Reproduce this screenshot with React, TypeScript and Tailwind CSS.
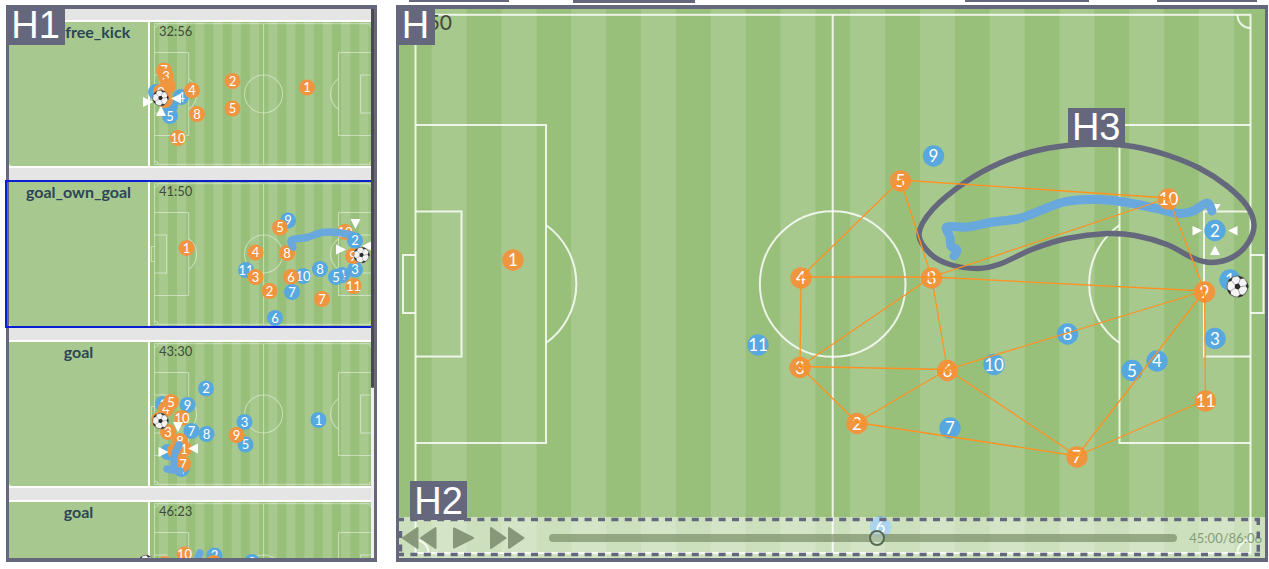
import { useState } from "react";

type Team = "home" | "away";
type Point = [number, number];
type Player = { team: Team; n: string; x: number; y: number };
type Arrow = { x: number; y: number; dir: "up" | "down" | "left" | "right" };
type MatchEvent = {
  name: string;
  time: string;
  players: Player[];
  over: Player[];
  ball: Point;
  trail: Point[];
  arrows: Arrow[];
};

const HOME = "#f0953f";
const AWAY = "#56a8de";

const h = (n: string, x: number, y: number): Player => ({ team: "home", n, x, y });
const a = (n: string, x: number, y: number): Player => ({ team: "away", n, x, y });

const squad: Player[] = [
  h("1", 513, 260), h("2", 857, 423.5), h("3", 800, 367.5), h("4", 801, 278),
  h("5", 900.5, 181), h("6", 947.5, 370.5), h("7", 1077, 457), h("8", 931.5, 278),
  h("9", 1204.5, 292), h("10", 1168.5, 199), h("11", 1205.5, 401),
  a("1", 1230, 280), a("2", 1215, 230.5), a("3", 1215, 338.5), a("4", 1157, 361),
  a("5", 1132, 370.5), a("6", 880.5, 527), a("7", 950, 428), a("8", 1067.5, 334),
  a("9", 933.5, 156), a("10", 994, 364.5), a("11", 758, 345),
];

const links: [string, string][] = [
  ["5", "10"], ["5", "4"], ["5", "8"], ["4", "8"], ["4", "3"], ["8", "3"], ["8", "6"],
  ["8", "10"], ["8", "9"], ["3", "6"], ["3", "2"], ["2", "6"], ["2", "7"], ["6", "7"],
  ["6", "9"], ["7", "9"], ["7", "11"], ["9", "11"], ["10", "9"],
];

const run: Point[] = [
  [954, 256], [957, 250], [951, 246], [950, 237], [947, 227], [967, 227], [993, 222],
  [1017, 219], [1033, 213.5], [1060, 203], [1077, 200], [1097, 199.5], [1117, 201],
  [1140, 205], [1167, 211], [1180, 213.5], [1193, 211], [1207, 203], [1212, 211],
];

const outline: Point[] = [
  [919, 234], [933, 209], [967, 181], [1000, 163], [1033, 151.5], [1067, 145.5],
  [1100, 144], [1133, 146.5], [1167, 155], [1200, 168.5], [1227, 186], [1247, 206],
  [1254, 225], [1248, 243], [1233, 257], [1212, 262.5], [1193, 258], [1167, 244.5],
  [1135, 235.5], [1107, 233.5], [1067, 238.5], [1033, 249], [1000, 264], [978, 268.5],
  [950, 264.5], [930, 253.5],
];

const events: MatchEvent[] = [
  {
    name: "shot_free_kick",
    time: "32:56",
    players: [
      a("", 156, 91), a("", 170, 105), a("4", 181, 96), a("5", 170, 115), h("7", 164, 69.5),
      h("3", 166, 75.5), h("", 168, 85), h("9", 161, 91), h("", 165, 99), h("4", 192, 89.5),
      h("8", 197, 113), h("10", 178, 137), h("2", 232.5, 80), h("5", 232.5, 107.5), h("1", 307, 86.5),
    ],
    over: [],
    ball: [160.5, 97],
    trail: [],
    arrows: [
      { x: 148, y: 101, dir: "right" },
      { x: 176, y: 97.5, dir: "left" },
      { x: 161, y: 110, dir: "up" },
    ],
  },
  {
    name: "goal_own_goal",
    time: "41:50",
    players: [
      a("9", 288, 59.5), h("5", 280, 66.5), h("10", 345, 71), h("1", 186.5, 87), h("4", 255.5, 91.5),
      h("8", 287, 92), a("11", 246, 109), h("3", 255.5, 116), a("10", 303, 115), h("6", 291, 116),
      a("8", 320, 108), a("4", 342, 114), a("5", 336, 116), a("3", 355, 108.5), h("2", 269.5, 130),
      a("7", 292, 131), h("7", 322, 138), h("11", 353.5, 125), a("6", 275, 157), h("9", 353, 95),
    ],
    over: [a("2", 355, 79.5)],
    ball: [361.5, 94],
    trail: [[293, 86], [291.5, 79], [307, 76.5], [322, 71.5], [337, 71.5], [352, 74]],
    arrows: [
      { x: 355.5, y: 63, dir: "down" },
      { x: 341, y: 88.5, dir: "right" },
      { x: 367, y: 85, dir: "left" },
    ],
  },
  {
    name: "goal",
    time: "43:30",
    players: [
      a("2", 206, 67.5), a("1", 163, 83), a("9", 187.5, 84), h("4", 166, 88), h("5", 171, 81),
      h("", 159, 99), h("10", 182, 97), a("7", 191.5, 110), a("8", 206.5, 113), h("3", 168, 111),
      a("3", 244.5, 101), a("5", 245.5, 123.5), h("9", 236.5, 114), a("1", 318.5, 99),
      a("", 168, 131), h("8", 180, 120), h("", 175, 130), h("1", 184, 128), a("4", 181.5, 148),
      h("7", 183, 143),
    ],
    over: [],
    ball: [160.5, 100],
    trail: [[179, 124], [174.5, 134], [173.5, 147], [167, 148], [180, 150]],
    arrows: [
      { x: 163.5, y: 131, dir: "right" },
      { x: 193, y: 127.5, dir: "left" },
      { x: 178, y: 106, dir: "down" },
    ],
  },
  {
    name: "goal",
    time: "46:23",
    players: [
      h("10", 184.5, 73.5), a("2", 214.5, 74.5), h("", 213.5, 82), a("9", 252, 81), h("", 165, 83),
    ],
    over: [],
    ball: [146, 82],
    trail: [[200, 72], [196, 82]],
    arrows: [],
  },
];

/** Catmull-Rom spline through the points, as cubic path segments. */
function spline(pts: Point[], closed = false) {
  const n = pts.length;
  const at = (i: number) => (closed ? pts[(i + n) % n] : pts[Math.max(0, Math.min(n - 1, i))]);
  let d = `M${pts[0][0]} ${pts[0][1]}`;
  const last = closed ? n : n - 1;
  for (let i = 0; i < last; i++) {
    const [p0, p1, p2, p3] = [at(i - 1), at(i), at(i + 1), at(i + 2)];
    d += ` C${p1[0] + (p2[0] - p0[0]) / 6} ${p1[1] + (p2[1] - p0[1]) / 6} ${p2[0] - (p3[0] - p1[0]) / 6} ${p2[1] - (p3[1] - p1[1]) / 6} ${p2[0]} ${p2[1]}`;
  }
  return closed ? d + "Z" : d;
}

function Field({ line, opacity }: { line: number; opacity: number }) {
  return (
    <g>
      <rect x="330" y="-20" width="1000" height="620" fill="#99c07b" />
      {Array.from({ length: 12 }, (_, i) => (
        <rect key={i} x={431.7 + i * 69.75} y="-20" width="35" height="620" fill="#a7c98e" />
      ))}
      <g fill="none" stroke="#ffffff" strokeWidth={line} strokeOpacity={opacity}>
        <rect x="415.5" y="14.8" width="835" height="538.2" />
        <path d="M832.7 15V553" />
        <circle cx="832.7" cy="284" r="72.8" />
        <path d="M415.5 125H546V443H415.5M415.5 211.5H461.5V356.5H415.5M415.5 255H403V313H415.5" />
        <path d="M1250.5 125H1119.5V443H1250.5M1250.5 211.5H1204V356.5H1250.5M1250.5 255H1263.5V313H1250.5" />
        <path d="M1119.5 225A72.5 72.5 0 0 0 1119.5 343M546 225A72.5 72.5 0 0 1 546 343" />
        <path d="M1237.5 15A13 13 0 0 0 1250.5 28M415.5 28A13 13 0 0 0 428.5 15M415.5 540A13 13 0 0 1 428.5 553M1237.5 553A13 13 0 0 1 1250.5 540" />
      </g>
    </g>
  );
}

function Marker({ p, r, size }: { p: Player; r: number; size: number }) {
  return (
    <g>
      <circle cx={p.x} cy={p.y} r={r} fill={p.team === "home" ? HOME : AWAY} />
      <text x={p.x} y={p.y + size * 0.36} fontSize={size} textAnchor="middle" fill="#ffffff">
        {p.n}
      </text>
    </g>
  );
}

function Ball({ x, y, r }: { x: number; y: number; r: number }) {
  return (
    <g transform={`translate(${x} ${y}) scale(${r / 10}) rotate(20)`}>
      <circle r="9.7" fill="#f4f4f4" stroke="#6a6a6a" strokeWidth="0.9" />
      <path d="M0-3.1 2.9-0.9 1.8 2.5H-1.8L-2.9-0.9Z" fill="#2a2a2a" />
      <path
        d="M-2.4-9.2 0-7.5 2.4-9.2ZM7.6-5.6 7.1-3.2 9.3-1.6 9.3-3.2ZM-7.6-5.6-7.1-3.2-9.3-1.6-9.3-3.2ZM7.4 5.9 4.8 6.2 3.6 8.7 5.6 7.9ZM-7.4 5.9-4.8 6.2-3.6 8.7-5.6 7.9Z"
        fill="#2a2a2a"
        stroke="#2a2a2a"
        strokeWidth="0.5"
      />
      <path
        d="M0-3.1V-7.5M2.9-0.9 7.1-3.2M-2.9-0.9-7.1-3.2M1.8 2.5 4.8 6.2M-1.8 2.5-4.8 6.2"
        fill="none"
        stroke="#8a8a8a"
        strokeWidth="0.6"
      />
    </g>
  );
}

const turn = { right: 0, down: 90, left: 180, up: 270 };

function Pointer({ arrow }: { arrow: Arrow }) {
  return (
    <path
      d="M-5-5 5 0-5 5Z"
      fill="#ffffff"
      transform={`translate(${arrow.x} ${arrow.y}) rotate(${turn[arrow.dir]})`}
    />
  );
}

function Trail({ pts, width }: { pts: Point[]; width: number }) {
  if (!pts.length) return null;
  return (
    <path
      d={spline(pts)}
      fill="none"
      stroke="#69a8dc"
      strokeWidth={width}
      strokeLinecap="round"
      strokeLinejoin="round"
    />
  );
}

function MiniPitch({ event }: { event: MatchEvent }) {
  return (
    <svg
      viewBox="150 21 221 144"
      preserveAspectRatio="xMinYMin meet"
      className="h-36 min-w-0 flex-1 overflow-visible"
      role="img"
      aria-label={`Positions at ${event.time}`}
    >
      <svg x="150" y="21" width="221" height="144" viewBox="150 21 221 144" overflow="hidden">
        <g transform="translate(46 18.8) scale(0.2613)">
          <Field line={4} opacity={0.45} />
        </g>
      </svg>
      <text x="159" y="35" fontSize="13" fill="#3f4a3c">
        {event.time}
      </text>
      {event.players.map((p, i) => (
        <Marker key={i} p={p} r={8} size={13} />
      ))}
      {event.arrows.map((arrow, i) => (
        <Pointer key={i} arrow={arrow} />
      ))}
      <Trail pts={event.trail} width={7.5} />
      {event.over.map((p, i) => (
        <Marker key={i} p={p} r={8} size={13} />
      ))}
      <Ball x={event.ball[0]} y={event.ball[1]} r={8} />
    </svg>
  );
}

function Tag({ children, className }: { children: string; className: string }) {
  return (
    <span
      className={`absolute z-10 flex items-center justify-center bg-[#65687d] font-['Liberation_Sans',sans-serif] text-[38px] leading-none text-white ${className}`}
    >
      {children}
    </span>
  );
}

function EventRow({ event, selected, onSelect }: { event: MatchEvent; selected: boolean; onSelect: () => void }) {
  return (
    <li>
      <button
        type="button"
        aria-pressed={selected}
        onClick={onSelect}
        className={`flex items-stretch border-y-2 ${
          selected ? "-ml-1 w-[calc(100%+4px)] border-l-2 border-[#0a1fd0] pl-0.5" : "w-full border-white"
        }`}
      >
        <span className="w-[139px] shrink-0 rounded-bl bg-[#a7c98f] text-center text-base leading-5 font-bold text-[#2f4457]">
          {event.name}
        </span>
        <span className="w-0.5 shrink-0 bg-white" />
        <MiniPitch event={event} />
      </button>
    </li>
  );
}

function BigPitch() {
  const at = (n: string) => squad.find((p) => p.team === "home" && p.n === n)!;
  const pointers = ["M1192.5 226V235.5L1202.5 230.5Z", "M1237.5 226V235.5L1228 230.5Z", "M1210 255H1220L1215 245.5Z", "M1211.5 204H1220.5L1216 212Z"];
  return (
    <svg
      viewBox="399 9 866 549"
      preserveAspectRatio="xMidYMid slice"
      className="block h-full w-full"
      role="img"
      aria-label="Pitch with player positions and passing links"
    >
      <Field line={2} opacity={0.82} />
      <text x="452" y="30" fontSize="21" textAnchor="end" fill="#3f4a3c">
        41:50
      </text>
      <path d={spline(outline, true)} fill="none" stroke="#65687d" strokeWidth="5.5" />
      <path d={pointers.join("")} fill="#ffffff" />
      <Trail pts={run} width={9} />
      {squad.map((p) => (
        <Marker key={p.team + p.n} p={p} r={10.7} size={17} />
      ))}
      <Ball x={1237.5} y={286.5} r={10.8} />
      <g stroke="#ff9122" strokeWidth="1.3">
        {links.map(([from, to]) => {
          const [p, q] = [at(from), at(to)];
          return <line key={from + "-" + to} x1={p.x} y1={p.y - 1} x2={q.x} y2={q.y - 1} />;
        })}
      </g>
    </svg>
  );
}

function Transport() {
  const [seconds, setSeconds] = useState(2700);
  const clock = (s: number) =>
    `${String(Math.floor(s / 60)).padStart(2, "0")}:${String(s % 60).padStart(2, "0")}`;
  const tri = { fill: "#87987a", stroke: "#87987a", strokeWidth: 2, strokeLinejoin: "round" as const };
  return (
    <div className="absolute inset-x-0 bottom-0 flex h-[41px] items-center bg-white/50 pr-[3px] pl-[3px]">
      <button type="button" aria-label="Rewind">
        <svg width="35" height="24" viewBox="0 0 35 24" {...tri}>
          <path d="M1 12 15.5 2V22ZM19 12 33.5 2V22Z" />
        </svg>
      </button>
      <button type="button" aria-label="Play" className="ml-4">
        <svg width="21" height="24" viewBox="0 0 21 24" {...tri}>
          <path d="M1 2.5 20 12 1 21.5Z" />
        </svg>
      </button>
      <button type="button" aria-label="Fast forward" className="ml-4">
        <svg width="35" height="24" viewBox="0 0 35 24" {...tri}>
          <path d="M1 2 15.5 12 1 22ZM19 2 33.5 12 19 22Z" />
        </svg>
      </button>
      <input
        type="range"
        aria-label="Match time"
        min={0}
        max={5166}
        value={seconds}
        onChange={(e) => setSeconds(Number(e.target.value))}
        className="mr-3 ml-6 h-4 min-w-0 flex-1 appearance-none bg-transparent [&::-webkit-slider-runnable-track]:h-2 [&::-webkit-slider-runnable-track]:rounded-full [&::-webkit-slider-runnable-track]:bg-[#6b8058]/60 [&::-webkit-slider-thumb]:-mt-1 [&::-webkit-slider-thumb]:size-4 [&::-webkit-slider-thumb]:appearance-none [&::-webkit-slider-thumb]:rounded-full [&::-webkit-slider-thumb]:border-2 [&::-webkit-slider-thumb]:border-[#556b50] [&::-webkit-slider-thumb]:bg-[#cfe3cf]/40"
      />
      <output className="text-[13px] leading-4 text-[#869d76]">{clock(seconds)}/86:06</output>
      <svg className="pointer-events-none absolute inset-y-0 left-0 h-full w-[calc(100%-5px)]" aria-hidden="true">
        <g stroke="#65687d" strokeDasharray="7 6.4" strokeWidth="3.5">
          <line x1="-2" y1="2.5" x2="100%" y2="2.5" />
          <line x1="-2" y1="37.5" x2="100%" y2="37.5" />
          <line x1="1.5" y1="14" x2="1.5" y2="38" />
          <line x1="99.8%" y1="1" x2="99.8%" y2="38" />
        </g>
      </svg>
    </div>
  );
}

export default function App() {
  const [selected, setSelected] = useState(1);
  return (
    <div className="flex h-screen flex-col bg-white pb-[7px] font-['Lato',sans-serif]">
      <header className="flex h-[5px] shrink-0 items-start pr-3 pl-[409px]">
        <span className="h-0.5 w-[100px] bg-[#65687d]" />
        <span className="ml-16 h-[3px] w-[122px] bg-[#65687d]" />
        <span className="ml-auto h-0.5 w-[124px] bg-[#65687d]" />
        <span className="ml-[68px] h-0.5 w-[100px] bg-[#65687d]" />
      </header>
      <div className="flex min-h-0 flex-1 gap-[19px] pr-px pl-[6px]">
        <aside className="relative flex w-[371px] shrink-0 border-x-[3px] border-y-4 border-[#65687d] bg-[#e5e5e5]">
          <Tag className="-top-1 -left-[3px] h-10 w-[59px]">H1</Tag>
          <ul className="-ml-1 flex min-w-0 flex-1 flex-col gap-3 overflow-hidden pt-[11px] pl-1">
            {events.map((event, i) => (
              <EventRow key={event.time} event={event} selected={i === selected} onSelect={() => setSelected(i)} />
            ))}
          </ul>
          <div className="w-[3px] shrink-0 bg-[#eeeeee]">
            <div className="h-[69%] rounded-b bg-[#4b4b4f]" />
          </div>
        </aside>
        <main className="relative min-w-0 flex-1 border-x-[3px] border-y-4 border-[#65687d]">
          <Tag className="-top-1 -left-[3px] h-10 w-[39px]">H</Tag>
          <BigPitch />
          <Transport />
          <Tag className="bottom-[38px] left-[11px] h-[39px] w-[57px]">H2</Tag>
          <Tag className="top-[18%] right-[16.2%] h-[39px] w-[57px]">H3</Tag>
        </main>
      </div>
    </div>
  );
}
